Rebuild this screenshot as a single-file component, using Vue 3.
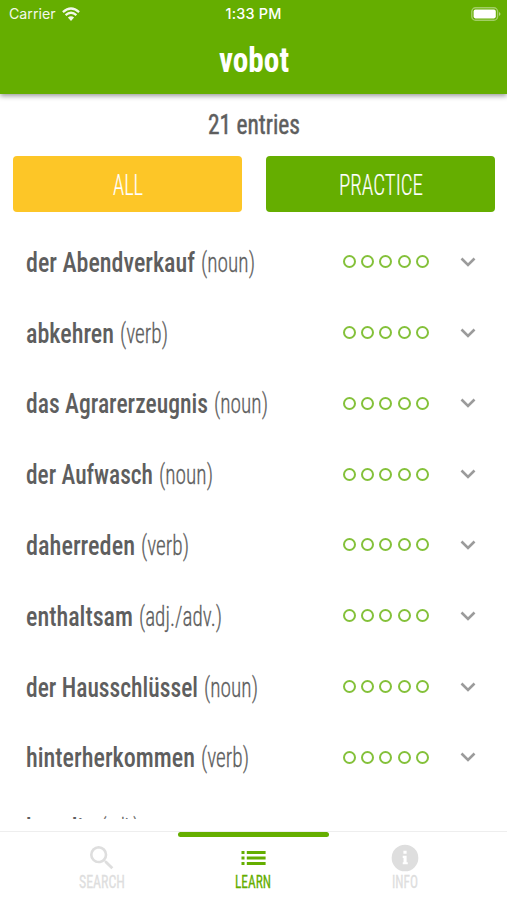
<script setup>
import { ref } from "vue";

// w / kw: drawn widths of the word and its part of speech
const entries = [
  { word: "der Abendverkauf", kind: "(noun)", w: 169, kw: 54 },
  { word: "abkehren", kind: "(verb)", w: 88, kw: 48 },
  { word: "das Agrarerzeugnis", kind: "(noun)", w: 182, kw: 54 },
  { word: "der Aufwasch", kind: "(noun)", w: 127, kw: 54 },
  { word: "daherreden", kind: "(verb)", w: 109, kw: 48 },
  { word: "enthaltsam", kind: "(adj./adv.)", w: 107, kw: 83 },
  { word: "der Hausschlüssel", kind: "(noun)", w: 172, kw: 54 },
  { word: "hinterherkommen", kind: "(verb)", w: 169, kw: 48 },
  { word: "kugelig", kind: "(adj.)", w: 69, kw: 38 },
];

const filter = ref("all");
const tab = ref("learn");
</script>

<template>
  <div class="screen">
    <header class="header">
      <div class="status">
        <div class="carrier">
          <span>Carrier</span>
          <svg class="wifi" viewBox="0 0 18 14">
            <path d="M9 14 L5.9 10.6 Q9 8 12.1 10.6 Z" fill="#fff" />
            <path d="M3.6 8.1 Q9 3.3 14.4 8.1 M.9 5.1 Q9 -2 17.1 5.1" fill="none" stroke="#fff" stroke-width="2.3" />
          </svg>
        </div>
        <span class="time">1:33 PM</span>
        <svg class="battery" viewBox="0 0 30 14">
          <rect x=".8" y=".8" width="25.8" height="12.4" rx="3.8" fill="none" stroke="#fff" stroke-width="1.4" stroke-opacity=".4" />
          <rect x="2.6" y="2.6" width="22.2" height="8.8" rx="1.8" fill="#fff" />
          <path d="M28 5 Q31 7 28 9Z" fill="#fff" fill-opacity=".5" />
        </svg>
      </div>
      <svg class="label title" width="70" height="40">
        <text x="0" y="29" textLength="70" lengthAdjust="spacingAndGlyphs">vobot</text>
      </svg>
    </header>

    <main class="content">
      <svg class="label count" width="92" height="36">
        <text x="0" y="27" textLength="92" lengthAdjust="spacingAndGlyphs">21 entries</text>
      </svg>
      <div class="filters">
        <button class="filter all" @click="filter = 'all'">
          <svg class="label" width="30" height="36">
            <text x="0" y="29" textLength="30" lengthAdjust="spacingAndGlyphs">ALL</text>
          </svg>
        </button>
        <button class="filter practice" @click="filter = 'practice'">
          <svg class="label" width="84" height="36">
            <text x="0" y="29" textLength="84" lengthAdjust="spacingAndGlyphs">PRACTICE</text>
          </svg>
        </button>
      </div>

      <ul class="list">
        <li v-for="entry in entries" :key="entry.word" class="entry">
          <div class="name">
            <svg class="label word" :width="entry.w" height="40">
              <text x="0" y="30" :textLength="entry.w" lengthAdjust="spacingAndGlyphs">{{ entry.word }}</text>
            </svg>
            <svg class="label kind" :width="entry.kw" height="40">
              <text x="0" y="30" :textLength="entry.kw" lengthAdjust="spacingAndGlyphs">{{ entry.kind }}</text>
            </svg>
          </div>
          <div class="level">
            <span v-for="n in 5" :key="n" class="dot"></span>
          </div>
          <svg class="chevron" viewBox="0 0 16 10">
            <path d="M1.5 1.5 L8 8 L14.5 1.5" />
          </svg>
        </li>
      </ul>
    </main>

    <nav class="tabs">
      <button class="tab" :class="{ active: tab === 'search' }" @click="tab = 'search'">
        <svg class="icon" viewBox="0 0 24 24">
          <path d="M15.5 14h-.79l-.28-.27A6.47 6.47 0 0 0 16 9.5 6.5 6.5 0 1 0 9.5 16c1.61 0 3.09-.59 4.23-1.57l.27.28v.79l5 4.99L20.49 19l-4.99-5zm-6 0C7.01 14 5 11.99 5 9.5S7.01 5 9.5 5 14 7.01 14 9.5 11.99 14 9.5 14z" />
        </svg>
        <svg class="label caption" width="46" height="20">
          <text x="0" y="17" textLength="46" lengthAdjust="spacingAndGlyphs">SEARCH</text>
        </svg>
      </button>
      <button class="tab" :class="{ active: tab === 'learn' }" @click="tab = 'learn'">
        <svg class="icon" viewBox="0 0 32 32">
          <path d="M4.5 9h3v3h-3zM4.5 14.5h3v3h-3zM4.5 20h3v3h-3zM9.8 9h18.8v3H9.8zM9.8 14.5h18.8v3H9.8zM9.8 20h18.8v3H9.8z" />
        </svg>
        <svg class="label caption" width="36" height="20">
          <text x="0" y="17" textLength="36" lengthAdjust="spacingAndGlyphs">LEARN</text>
        </svg>
      </button>
      <button class="tab" :class="{ active: tab === 'info' }" @click="tab = 'info'">
        <svg class="icon" viewBox="0 0 24 24">
          <path d="M12 2a10 10 0 1 0 0 20 10 10 0 0 0 0-20zM10.8 6.6h2.4v2.2h-2.4zM10.3 10.4h2.9v4.7h.9v1.6h-3.8v-1.6h.6V12h-.6z" fill-rule="evenodd" />
        </svg>
        <svg class="label caption" width="26" height="20">
          <text x="0" y="17" textLength="26" lengthAdjust="spacingAndGlyphs">INFO</text>
        </svg>
      </button>
    </nav>
  </div>
</template>

<style>
body {
  background: #fff;
}
</style>

<style scoped>
.screen {
  width: 507px;
  height: 900px;
  display: flex;
  flex-direction: column;
  overflow: hidden;
  background: #fff;
  color: #5e5e5e;
}

.label {
  display: block;
  flex: none;
  overflow: visible;
  font-family: Roboto, "Liberation Sans", sans-serif;
  font-stretch: 75%;
  fill: currentColor;
}

.header {
  position: relative;
  z-index: 1;
  flex: none;
  height: 94px;
  display: flex;
  flex-direction: column;
  align-items: center;
  background: #65ae00;
  color: #fff;
  box-shadow: 0 2px 5px rgba(0, 0, 0, 0.4);
}

.status {
  width: 100%;
  height: 27px;
  box-sizing: border-box;
  padding: 0 6px 0 9px;
  display: grid;
  grid-template-columns: 1fr auto 1fr;
  align-items: center;
  font-family: Inter, sans-serif;
  font-size: 14.2px;
}

.carrier {
  display: flex;
  align-items: center;
  gap: 6px;
  opacity: 0.92;
}

.wifi {
  width: 18px;
  height: 14px;
}

.time {
  margin-right: 3px;
  font-size: 14.4px;
  font-weight: 500;
  letter-spacing: 0.2px;
}

.battery {
  width: 30px;
  height: 14px;
  justify-self: end;
}

.title {
  margin-top: 16px;
  font-size: 35.5px;
  font-weight: 700;
}

.content {
  flex: none;
  height: 725px;
  display: flex;
  flex-direction: column;
  overflow: hidden;
}

.count {
  align-self: center;
  margin-top: 13px;
  font-size: 28.5px;
  font-weight: 400;
  stroke: currentColor;
  stroke-width: 0.5px;
}

.filters {
  flex: none;
  display: grid;
  grid-template-columns: 1fr 1fr;
  gap: 24px;
  padding: 13px 12px 0 13px;
}

.filter {
  height: 56px;
  border: none;
  border-radius: 4px;
  padding: 0;
  display: flex;
  align-items: center;
  justify-content: center;
  color: #fff;
  font-size: 30px;
  font-weight: 300;
  cursor: pointer;
}

.filter .label {
  stroke: currentColor;
  stroke-width: 0.2px;
}

.all {
  background: #fdc627;
}

.practice {
  background: #65ae00;
}

.list {
  list-style: none;
  margin: 14.4px 0 0;
  padding: 0 31px 0 26px;
}

.entry {
  height: 70.8px;
  display: flex;
  align-items: center;
}

.name {
  flex: none;
  width: 317px;
  display: flex;
  gap: 5.8px;
  font-size: 28.5px;
}

.word {
  font-weight: 550;
}

.kind {
  font-weight: 300;
  stroke: currentColor;
  stroke-width: 0.3px;
}

.level {
  flex: none;
  display: flex;
  gap: 5.2px;
}

.dot {
  width: 13px;
  height: 13px;
  box-sizing: border-box;
  border: 2px solid #84c13a;
  border-radius: 50%;
}

.chevron {
  width: 16px;
  height: 10px;
  margin-left: auto;
  fill: none;
  stroke: #9b9b9b;
  stroke-width: 2.6;
}

.tabs {
  flex: 1;
  display: flex;
  justify-content: center;
  margin-top: 12px;
  border-top: 1px solid #eee;
}

.tab {
  position: relative;
  width: 151.8px;
  padding: 10px 0 0;
  border: none;
  background: none;
  display: flex;
  flex-direction: column;
  align-items: center;
  color: #dedede;
  cursor: pointer;
}

.active {
  color: #65ae00;
}

.active::before {
  content: "";
  position: absolute;
  top: -0.5px;
  left: 0;
  width: 100%;
  height: 5px;
  border-radius: 3px;
  background: #65ae00;
}

.icon {
  width: 32px;
  height: 32px;
  fill: currentColor;
}

.caption {
  margin-top: -3px;
  font-size: 19px;
  stroke: currentColor;
  stroke-width: 0.3px;
}
</style>
